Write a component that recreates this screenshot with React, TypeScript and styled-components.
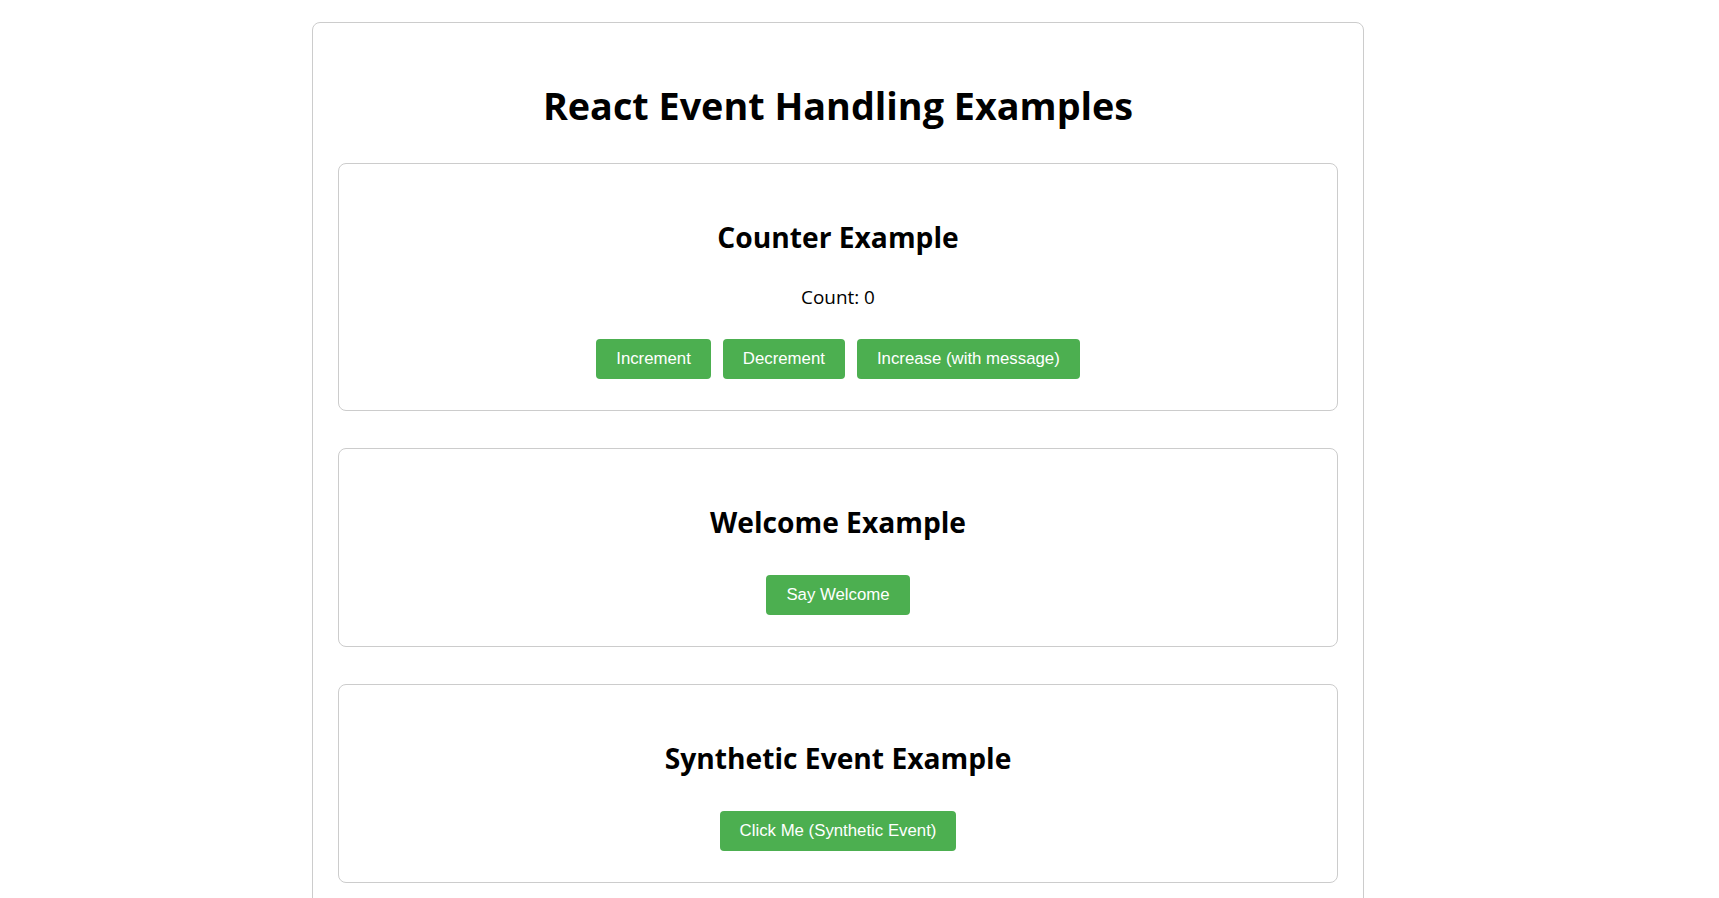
import React, { useState } from "react";
import styled, { createGlobalStyle } from "styled-components";

const GlobalStyle = createGlobalStyle`
  html, body {
    margin: 0;
    padding: 0;
    background: #ffffff;
  }
  body {
    font-family: "Open Sans", "Noto Sans", Arial, sans-serif;
    color: #000;
  }
  * { box-sizing: border-box; }
`;

const Page = styled.div`
  padding: 22px 0 0 312px;
`;

const Container = styled.main`
  width: 1052px;
  border: 1px solid #cccccc;
  border-radius: 8px;
  padding: 25px;
  display: flex;
  flex-direction: column;
`;

const Title = styled.h1`
  margin: 35px 0 34px;
  font-family: "Open Sans", "Noto Sans", sans-serif;
  font-size: 37.75px;
  line-height: 46px;
  font-weight: 700;
  text-align: center;
  color: #000;
`;

const Card = styled.section`
  width: 1000px;
  border: 1px solid #cccccc;
  border-radius: 8px;
  padding: 55px 20px 31px;
  display: flex;
  flex-direction: column;
  align-items: center;
  & + & {
    margin-top: 37px;
  }
`;

const Heading = styled.h2<{ $gap: number }>`
  margin: 0 0 ${(p) => p.$gap}px;
  font-family: "Open Sans", "Noto Sans", sans-serif;
  font-size: 28.2px;
  line-height: 36px;
  font-weight: 700;
  color: #000;
`;

const Count = styled.p`
  margin: 0 0 30px;
  font-family: "Open Sans", "Noto Sans", sans-serif;
  font-size: 18.9px;
  line-height: 24px;
  color: #000;
`;

const ButtonRow = styled.div`
  display: flex;
  gap: 12px;
  justify-content: center;
`;

const Button = styled.button`
  height: 40px;
  padding: 0 20px;
  border: none;
  border-radius: 4px;
  background: #4caf50;
  color: #ffffff;
  font-family: "Liberation Sans", Arial, sans-serif;
  font-size: 16.8px;
  line-height: 20px;
  cursor: pointer;
`;

export default function App() {
  const [count, setCount] = useState(0);
  return (
    <>
      <GlobalStyle />
      <Page>
        <Container>
          <Title>React Event Handling Examples</Title>
          <Card>
            <Heading $gap={30}>Counter Example</Heading>
            <Count>Count: {count}</Count>
            <ButtonRow>
              <Button onClick={() => setCount((c) => c + 1)}>Increment</Button>
              <Button onClick={() => setCount((c) => c - 1)}>Decrement</Button>
              <Button onClick={() => setCount((c) => c + 1)}>Increase (with message)</Button>
            </ButtonRow>
          </Card>
          <Card>
            <Heading $gap={35}>Welcome Example</Heading>
            <ButtonRow>
              <Button>Say Welcome</Button>
            </ButtonRow>
          </Card>
          <Card>
            <Heading $gap={35}>Synthetic Event Example</Heading>
            <ButtonRow>
              <Button>Click Me (Synthetic Event)</Button>
            </ButtonRow>
          </Card>
        </Container>
      </Page>
    </>
  );
}
